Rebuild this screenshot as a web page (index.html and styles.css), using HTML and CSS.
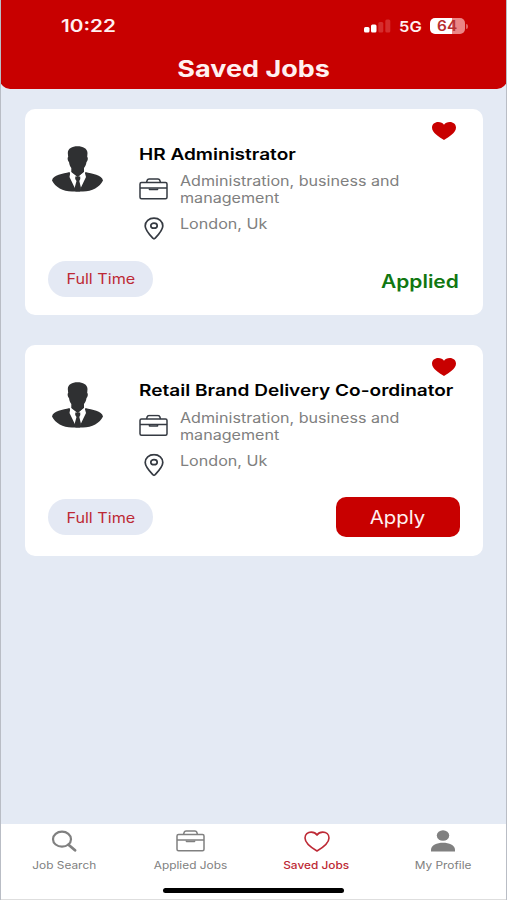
FILE: index.html
```
<!DOCTYPE html>
<html lang="en">
<head>
<meta charset="utf-8">
<title>Saved Jobs</title>
<link rel="stylesheet" href="styles.css">
</head>
<body>
<svg width="0" height="0" class="defs" aria-hidden="true">
  <symbol id="person" viewBox="0 0 51 46" preserveAspectRatio="none">
    <path fill="#2f3032" d="M25.500 0.300C20 0.300 16 2.500 15.800 7L16.200 11C15.200 11.300 15.600 15 17 16C17.500 19 18 20.500 19.300 22V27L25.500 32L32 27V22C33.300 20.500 34 19 34.500 16C36 15 36.200 11.300 35.200 11L35.500 7C35.200 2.500 31 0.300 25.500 0.300Z"/>
    <path fill="#2f3032" d="M17.500 26C11 28 1 28.500 0 34.500C3 41 11 45.500 20 45.500H31C40 45.500 48 41 51 34.500C50 28.500 40 28 33.500 26L25.800 44Z"/>
    <path fill="#fff" d="M18.500 25.500L17.500 31L24 44.500H27.500L34 31L32.500 25.500L25.700 31Z"/>
    <path fill="#2f3032" d="M19.500 25L25.700 31L32 25Z M23.300 30.500H28.200L28.300 33L27.300 35L29 42L28 45.500H23.500L22.600 42L24.500 35L23.200 33Z"/>
  </symbol>
  <symbol id="briefcase" viewBox="0 0 29 22" preserveAspectRatio="none">
    <g fill="none" stroke="currentColor" stroke-width="1.500" stroke-linejoin="round">
      <rect x="1" y="4.500" width="27" height="16.300" rx="1.500"/>
      <path d="M7.500 4.500L8.300 2Q8.600 1 10 1H19Q20.400 1 20.700 2L21.500 4.500M1 10H28"/>
      <path d="M10.500 10.500V11.500H18.500V10.500" stroke-width="1.600"/>
    </g>
  </symbol>
  <symbol id="pin" viewBox="0 0 20 23" preserveAspectRatio="none">
    <path d="M10 1.200C5 1.200 1.200 4.600 1.200 9C1.200 13 5.800 18 8.800 21.200Q10 22.300 11.200 21.200C14.200 18 18.800 13 18.800 9C18.800 4.600 15 1.200 10 1.200Z" fill="none" stroke="currentColor" stroke-width="1.700"/>
    <ellipse cx="10" cy="8.700" rx="3.200" ry="2.500" fill="none" stroke="currentColor" stroke-width="1.700"/>
  </symbol>
  <symbol id="heart" viewBox="0 0 26 20" preserveAspectRatio="none">
    <path d="M13 19C8 16.200 1 11.800 1 6.600C1 3.200 3.800 1 7.200 1C9.800 1 11.800 2.000 13 3.800C14.200 2.000 16.200 1 18.800 1C22.200 1 25 3.200 25 6.600C25 11.800 18 16.200 13 19Z" stroke-linejoin="round"/>
  </symbol>
</svg>
<div class="screen">
  <header class="header">
    <div class="status">
      <span class="clock wide">10:22</span>
      <div class="indicators">
        <svg class="signal" viewBox="0 0 27 14"><rect x="0" y="8" width="5.500" height="5.500" rx="1.500" fill="#fff"/><rect x="7" y="5.500" width="5.500" height="8" rx="1.500" fill="#fff"/><rect x="14.300" y="3" width="5" height="10.500" rx="1.500" fill="#d52d2d"/><rect x="21.300" y="0.500" width="5" height="13" rx="1.500" fill="#d52d2d"/></svg>
        <span class="network wide">5G</span>
        <div class="battery"><span class="level wide">64</span></div>
        <span class="terminal"></span>
      </div>
    </div>
    <h1 class="title"><span class="wide">Saved Jobs</span></h1>
  </header>
  <main class="list">
    <article class="card">
      <svg class="favourite"><use href="#heart"/></svg>
      <div class="summary">
        <svg class="avatar"><use href="#person"/></svg>
        <div class="details">
          <h2 class="role wide">HR Administrator</h2>
          <div class="row sector"><svg class="case"><use href="#briefcase"/></svg><p class="wide">Administration, business and<br>management</p></div>
          <div class="row place"><svg class="marker"><use href="#pin"/></svg><p class="wide">London, Uk</p></div>
        </div>
      </div>
      <div class="actions"><span class="badge"><span class="wide">Full Time</span></span><span class="applied wide">Applied</span></div>
    </article>
    <article class="card open">
      <svg class="favourite"><use href="#heart"/></svg>
      <div class="summary">
        <svg class="avatar"><use href="#person"/></svg>
        <div class="details">
          <h2 class="role wide">Retail Brand Delivery Co-ordinator</h2>
          <div class="row sector"><svg class="case"><use href="#briefcase"/></svg><p class="wide">Administration, business and<br>management</p></div>
          <div class="row place"><svg class="marker"><use href="#pin"/></svg><p class="wide">London, Uk</p></div>
        </div>
      </div>
      <div class="actions"><span class="badge"><span class="wide">Full Time</span></span><button class="apply"><span class="wide">Apply</span></button></div>
    </article>
  </main>
  <footer class="footer">
    <nav class="tabs">
      <a class="tab"><svg viewBox="0 0 26 22"><ellipse cx="11" cy="9.200" rx="9" ry="7.500" fill="none" stroke="currentColor" stroke-width="2.200"/><path d="M17.500 14.700L24 20.300" stroke="currentColor" stroke-width="2.800" stroke-linecap="round"/></svg><span class="wide">Job Search</span></a>
      <a class="tab"><svg class="tab-case"><use href="#briefcase"/></svg><span class="wide">Applied Jobs</span></a>
      <a class="tab active"><svg class="tab-heart"><use href="#heart"/></svg><span class="wide">Saved Jobs</span></a>
      <a class="tab"><svg viewBox="0 0 26 22"><ellipse cx="13" cy="5.500" rx="6.200" ry="5.300" fill="currentColor"/><path d="M1 21.500V20C1 15 7 12.800 13 12.800S25 15 25 20V21.500Z" fill="currentColor"/></svg><span class="wide">My Profile</span></a>
    </nav>
    <div class="home"></div>
  </footer>
</div>
</body>
</html>
```
FILE: styles.css
```
* { box-sizing: border-box; margin: 0; padding: 0; }
body { font-family: Inter, "Liberation Sans", sans-serif; background: #e4eaf4; }
.defs { position: absolute; }
svg { display: block; flex: none; }
.wide { display: inline-block; white-space: nowrap; transform: scaleX(1.22); }
.screen { width: 507px; height: 900px; display: flex; flex-direction: column; background: #e4eaf4; border-left: 1px solid #b9bdc5; border-right: 1px solid #b9bdc5; overflow: hidden; }
.header { height: 89px; margin: 0 -1px; background: #c80000; border-radius: 0 0 10px 10px; color: #fff0f0; flex: none; }
.status { height: 52px; padding: 0 39px 0 61px; display: flex; justify-content: space-between; align-items: center; }
.clock { font-size: 17px; font-weight: 600; transform-origin: left; }
.indicators { display: flex; align-items: center; }
.signal { width: 27px; height: 14px; }
.network { width: 22px; margin-left: 8px; font-size: 15px; font-weight: 600; transform-origin: left; transform: scaleX(1.1); }
.battery { width: 35px; height: 16px; margin-left: 9px; border-radius: 5px; background: linear-gradient(90deg, #fff 64%, #eb8585 64%); display: flex; align-items: center; justify-content: center; color: #b83030; }
.level { font-size: 14px; font-weight: 600; line-height: 16px; transform: scaleX(1.1); }
.terminal { width: 2px; height: 5px; margin-left: 1px; border-radius: 0 2px 2px 0; background: #e36060; }
.title { height: 32px; line-height: 33px; font-size: 22.500px; font-weight: 700; text-align: center; }
.title .wide { transform: scaleX(1.2); }
.list { flex: 1; padding: 20px 23px 0 24px; display: flex; flex-direction: column; gap: 30px; }
.card { position: relative; height: 206px; padding: 0 23px; background: #fff; border-radius: 10px; }
.card.open { height: 211px; }
.favourite { position: absolute; right: 26px; top: 12px; width: 26px; height: 20px; fill: #c80000; }
.summary { display: flex; height: 152px; padding: 35px 0 0 4px; }
.avatar { width: 51px; height: 46px; margin-top: 2px; }
.details { margin-left: 36px; }
.role { display: block; width: max-content; font-size: 16px; line-height: 20px; font-weight: 600; color: #000; transform-origin: left; transform: scaleX(1.19); }
.row { display: flex; color: #808080; font-size: 14px; line-height: 16.500px; }
.row p { transform-origin: left; transform: scaleX(1.15); }
.sector { margin-top: 9px; gap: 12px; }
.case { width: 29px; height: 22px; margin-top: 5px; color: #353a42; }
.place { margin: 10px 0 0 5px; gap: 16px; }
.marker { width: 20px; height: 23px; margin-top: 1px; color: #353a42; }
.open .row { transform: translateY(0.5px); }
.actions { display: flex; justify-content: space-between; align-items: center; height: 36px; }
.open .actions { height: 40px; }
.badge { width: 105px; height: 36px; padding-bottom: 2px; border-radius: 18px; display: flex; align-items: center; justify-content: center; background: #e4e9f4; color: #bd2935; font-size: 14px; }
.open .badge { padding-bottom: 0; }
.badge .wide { transform: scaleX(1.155); }
.applied { color: #117711; font-size: 18px; font-weight: 600; transform-origin: right; transform: translateX(-1px) scaleX(1.165); padding-top: 4px; }
.apply { width: 124px; height: 40px; border: 0; border-radius: 10px; background: #c80000; color: #fff0f0; font: 400 18px Inter, sans-serif; }
.apply .wide { transform: scaleX(1.13); }
.footer { height: 76px; background: #fff; border-bottom: 1px solid #dedede; flex: none; }
.tabs { display: grid; grid-template-columns: repeat(4, 1fr); height: 64px; padding-top: 6px; }
.tab { display: flex; flex-direction: column; align-items: center; color: #808080; font-size: 10.500px; line-height: 14px; gap: 7px; }
.tab .wide { transform: scaleX(1.13); }
.tab svg { width: 26px; height: 22px; }
.tab svg.tab-case { width: 29px; }
.tab svg.tab-heart { height: 21px; margin: 1px 0 0; fill: none; stroke: currentColor; stroke-width: 1.600; overflow: visible; }
.tab.active { color: #bd2935; font-weight: 500; }
.home { width: 181px; height: 5px; margin: 0 auto; border-radius: 3px; background: #000; }
```
